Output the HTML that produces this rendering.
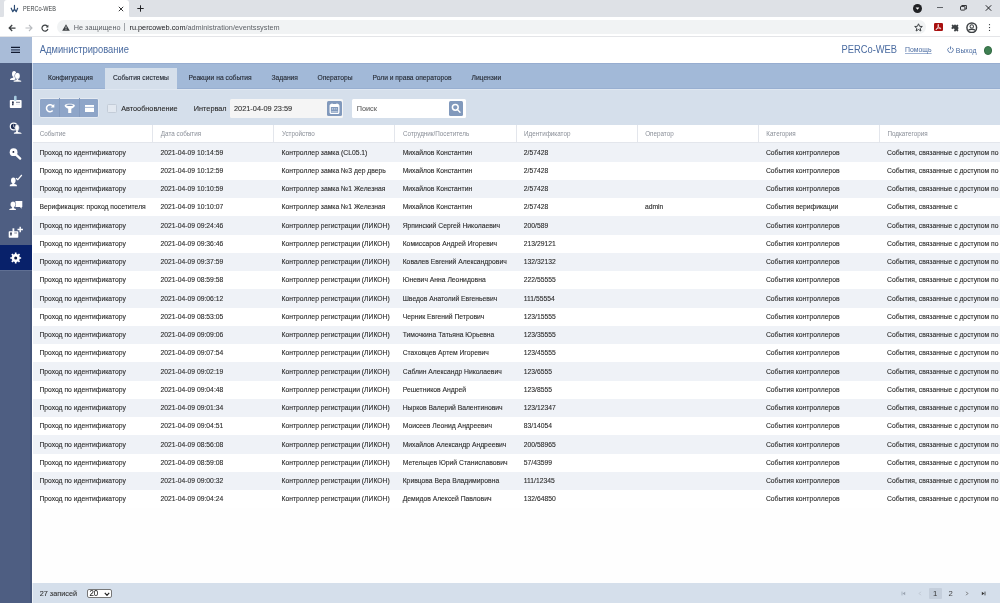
<!DOCTYPE html>
<html><head><meta charset="utf-8"><title>PERCo-WEB</title>
<style>
*{margin:0;padding:0;box-sizing:border-box}
html,body{width:1000px;height:603px;overflow:hidden;background:#fff;font-family:"Liberation Sans",sans-serif;position:relative}
#root{position:absolute;left:0;top:0;width:1000px;height:603px;overflow:hidden;will-change:transform}
.abs{position:absolute}
/* chrome */
#tabstrip{position:absolute;left:0;top:0;width:1000px;height:17.5px;background:#dee1e6}
#feet{position:absolute;left:0;top:12px;width:137px;height:5.5px;background:#fff}
#tab{position:absolute;left:4px;top:0;width:125px;height:17.5px;background:#fff;border-radius:3px 3px 0 0}
#tabL{position:absolute;left:0;top:0;width:4px;height:17.5px;background:#dee1e6;border-radius:0 0 3px 0}
#tabR{position:absolute;left:129px;top:0;width:8px;height:17.5px;background:#dee1e6;border-radius:0 0 0 3px}
#tabTL{position:absolute;left:4px;top:0;width:125px;height:6px;border-radius:3px 3px 0 0;background:#fff}
#tabtitle{position:absolute;left:23px;top:4.6px;font-size:6.8px;color:#3c4043;white-space:nowrap;line-height:8px;transform:scaleX(0.815);transform-origin:0 0}
#toolbar{position:absolute;left:0;top:17px;width:1000px;height:19.5px;background:#fff;border-bottom:0.6px solid #e4e5e8}
#omni{position:absolute;left:57px;top:20.3px;width:869px;height:14px;background:#f1f3f4;border-radius:7px}
.url{position:absolute;top:22.5px;font-size:7.3px;line-height:10px;white-space:nowrap}
/* app */
#side{position:absolute;left:0;top:36.5px;width:32px;height:567px;background:#4e5e82}
#sidehdr{position:absolute;left:0;top:36.5px;width:32px;height:26.5px;background:#a9bcd8}
#sidesel{position:absolute;left:0;top:245px;width:31.8px;height:25.8px;background:#08216a;border-bottom:1.2px solid #5f6f93}
#sideedge{position:absolute;left:29.8px;top:63px;width:2px;height:540px;background:#46567a}
#strip{position:absolute;left:31.8px;top:63px;width:1.4px;height:540px;background:rgba(255,255,255,0.5)}
#apphdr{position:absolute;left:32px;top:36.5px;width:968px;height:26.5px;background:#fff}
#title{position:absolute;left:39.8px;top:44.1px;transform:scaleY(1.08);font-size:9.35px;color:#4a6ba0;white-space:nowrap;line-height:12px}
#brand{position:absolute;left:841.5px;top:44.1px;transform:scaleY(1.08);font-size:9.35px;color:#4a6ba0;white-space:nowrap;line-height:12px}
#help{position:absolute;left:905px;top:45.1px;font-size:6.9px;color:#4a6ba0;text-decoration:underline;text-decoration-thickness:0.5px;text-decoration-color:#9fb2d2;text-underline-offset:0.5px;white-space:nowrap;line-height:9px}
#logout{position:absolute;left:955.8px;top:45.5px;font-size:6.9px;color:#4a6ba0;white-space:nowrap;line-height:9px}
#dot{position:absolute;left:983.8px;top:46px;width:8.6px;height:8.6px;border-radius:50%;background:#3f7f52;border:0.6px solid #356c45}
#tabbar{position:absolute;left:32px;top:63px;width:968px;height:26px;background:#a2b9d8;border-top:1px solid #97add0;border-bottom:0.8px solid #98afd1}
.tb{position:absolute;top:74.1px;font-size:6.7px;color:#262b35;-webkit-text-stroke:0.12px #262b35;white-space:nowrap;line-height:8px}
#acttab{position:absolute;left:105px;top:68px;width:72px;height:21px;background:#d5dfeb}
#tools{position:absolute;left:32px;top:89px;width:968px;height:36px;background:#d5dfeb;border-top:1px solid #dfe7f1}
#btngrp{position:absolute;left:39.3px;top:97.5px;width:60.1px;height:20.4px;background:#8ea5c8;border-radius:2px;border:0.6px solid #e4eaf2}
.bsep{position:absolute;top:98.1px;width:0.8px;height:19.2px;background:#8299bd}
#chk{position:absolute;left:107px;top:103.7px;width:9.8px;height:9.8px;border:0.8px solid #c3ccd8;background:#e2e8f0;border-radius:1.5px}
.lbl{position:absolute;font-size:7.3px;color:#2a2a2a;white-space:nowrap;line-height:9px;transform:scaleY(1.1);-webkit-text-stroke-width:0.1px}
#inp1{position:absolute;left:229.8px;top:99px;width:113.4px;height:18.8px;background:#f5f5f5;border-radius:1.5px}
#cal{position:absolute;left:327.4px;top:101px;width:14.4px;height:14.8px;background:#8199bc;border-radius:1.5px}
#inp2{position:absolute;left:351.8px;top:99.2px;width:113.8px;height:18.4px;background:#fff;border-radius:1.5px}
#srch{position:absolute;left:449px;top:101px;width:14px;height:14.8px;background:#8199bc;border-radius:1.5px}
/* table */
#tablebg{position:absolute;left:33.2px;top:124.9px;width:969px;height:458.4px;background:#fefefe}
#thead{position:absolute;left:33.2px;width:966.8px;overflow:hidden;background:#fff;border-bottom:0.7px solid #e3e6ec}
.hc{position:absolute;top:0;padding-top:0.6px;width:121.1px;height:100%;padding-left:7.5px;font-size:6.3px;color:#8a8f98;line-height:18.4px;white-space:nowrap;overflow:hidden;border-left:0.7px solid #e3e6ec}
.row{position:absolute;left:33.2px;width:966.8px;overflow:hidden;height:18.25px}
.odd{background:#eff2f7}
.even{background:#fff}
.c{position:absolute;top:0.4px;width:121.1px;height:100%;padding-left:8.2px;font-size:6.78px;color:#2a2a2a;-webkit-text-stroke:0.1px #2a2a2a;line-height:18.25px;transform:scaleY(1.06);white-space:nowrap;overflow:hidden}
#footer{position:absolute;left:32px;top:583.3px;width:968px;height:20px;background:#d5dfeb}
#sel{position:absolute;left:87.2px;top:588.8px;width:24.5px;height:9.6px;border:0.8px solid #767676;background:#fff;border-radius:2px}
.pg{position:absolute;top:589px;font-size:7.2px;color:#444;line-height:10px;white-space:nowrap}
#pgact{position:absolute;left:929px;top:588px;width:12.5px;height:11px;background:#c4cedb;border-radius:1px}

</style></head><body><div id="root">
<div id="tabstrip"></div>
<div id="feet"></div><div id="tabL"></div><div id="tabR"></div><div id="tab"></div>
<svg class="abs" style="left:8px;top:3px" width="14" height="12" viewBox="0 0 14 12"><path d="M3.2 5.2L4.8 8.7L6.46 6.2L8.2 8.7L9.6 5.3M6.46 2.4V7.2" stroke="#2b4a72" stroke-width="1.2" fill="none" stroke-linecap="round" stroke-linejoin="round"/></svg>
<div id="tabtitle">PERCo-WEB</div>
<svg class="abs" style="left:118px;top:6px" width="6" height="6" viewBox="0 0 6 6"><path d="M0.8 0.8L5.2 5.2M5.2 0.8L0.8 5.2" stroke="#202124" stroke-width="0.9"/></svg>
<svg class="abs" style="left:136.8px;top:5px" width="7" height="7" viewBox="0 0 7 7"><path d="M3.5 0.3V6.7M0.3 3.5H6.7" stroke="#202124" stroke-width="1"/></svg>
<svg class="abs" style="left:912.5px;top:4.1px" width="9" height="9" viewBox="0 0 9 9"><circle cx="4.5" cy="4.5" r="4.5" fill="#202124"/><path d="M2.6 3.6H6.4L4.5 5.8Z" fill="#fff"/></svg>
<div class="abs" style="left:937px;top:7px;width:6px;height:0.7px;background:#5f6368"></div>
<svg class="abs" style="left:960.3px;top:5.3px" width="7" height="5.5" viewBox="0 0 7 5.5"><rect x="0.5" y="1.4" width="4.4" height="3.7" rx="0.6" fill="none" stroke="#202124" stroke-width="0.9"/><path d="M1.8 1.2V0.5H6.4V4H5.2" fill="none" stroke="#202124" stroke-width="0.9"/></svg>
<svg class="abs" style="left:984.5px;top:5px" width="7" height="6" viewBox="0 0 7 6"><path d="M0.8 0.3L6.2 5.7M6.2 0.3L0.8 5.7" stroke="#202124" stroke-width="1"/></svg>
<div id="toolbar"></div>
<svg class="abs" style="left:7.5px;top:23.5px" width="8" height="8" viewBox="0 0 8 8"><path d="M7.5 4H1.4M4.2 1L1.2 4L4.2 7" stroke="#3c4043" stroke-width="1.25" fill="none"/></svg>
<svg class="abs" style="left:24.5px;top:23.5px" width="8" height="8" viewBox="0 0 8 8"><path d="M0.5 4H6.8M4 1L7 4L4 7" stroke="#b9bcc0" stroke-width="1.1" fill="none"/></svg>
<svg class="abs" style="left:40.5px;top:23.5px" width="8" height="8" viewBox="0 0 8 8"><path d="M6.6 2.6A3 3 0 1 0 6.9 4.8" stroke="#3c4043" stroke-width="1.2" fill="none"/><path d="M7.4 0.8V3.4H4.8Z" fill="#3c4043"/></svg>
<div id="omni"></div>
<svg class="abs" style="left:62px;top:23.5px" width="8" height="7" viewBox="0 0 8 7"><path d="M4 0.3L7.8 6.8H0.2Z" fill="#3c4043"/><path d="M4 2.4V4.5M4 5.2V6" stroke="#f1f3f4" stroke-width="0.8"/></svg>
<div class="url" style="left:73.75px;color:#5f6368;font-size:7.27px">Не защищено</div>
<div class="abs" style="left:124.3px;top:23.3px;width:0.7px;height:8px;background:#a0a4a8"></div>
<div class="url" style="left:129.5px;color:#202124"><span>ru.percoweb.com</span><span style="color:#5f6368">/administration/eventssystem</span></div>
<svg class="abs" style="left:913.5px;top:23px" width="9" height="9" viewBox="0 0 9 9"><path d="M4.5 0.8L5.6 3.3L8.3 3.5L6.2 5.3L6.9 8L4.5 6.5L2.1 8L2.8 5.3L0.7 3.5L3.4 3.3Z" fill="none" stroke="#3c4043" stroke-width="1" stroke-linejoin="round"/></svg>
<div class="abs" style="left:934.2px;top:22.9px;width:8.5px;height:8px;background:#a8100f;border-radius:1.3px"></div>
<svg class="abs" style="left:934.2px;top:22.9px" width="8.5" height="8" viewBox="0 0 8.5 8"><path d="M4.3 1.3C3.9 1.3 3.9 2.6 4.5 3.8C5.2 5.3 6.4 6 7 5.6C7.4 5.2 6 4.9 4.5 5.1C3 5.4 1.6 6.4 1.9 6.8C2.3 7.1 3.2 5.5 3.9 4.1C4.5 2.7 4.7 1.3 4.3 1.3Z" fill="none" stroke="#fff" stroke-width="0.75"/></svg>
<svg class="abs" style="left:950.8px;top:23px" width="9" height="9" viewBox="0 0 9 9"><g transform="rotate(45 4.5 4.5)"><path d="M1.8 2.5H3.5V1.9A1 1 0 0 1 5.5 1.9V2.5H7.2V4.2H7.8A1 1 0 0 1 7.8 6.2H7.2V7.9H5.5V7.3A1 1 0 0 0 3.5 7.3V7.9H1.8V6.2H1.2A1 1 0 0 1 1.2 4.2H1.8Z" fill="#3c4043"/></g></svg>
<svg class="abs" style="left:966px;top:21.5px" width="11.5" height="11.5" viewBox="0 0 12 12"><circle cx="6" cy="6" r="5.8" fill="#3c4043"/><circle cx="6" cy="6" r="4.3" fill="#fff"/><circle cx="6" cy="4.6" r="2.3" fill="#3c4043"/><circle cx="6" cy="4.6" r="1.25" fill="#fff"/><path d="M2.3 8.9C3.3 7.1 8.7 7.1 9.7 8.9" stroke="#3c4043" stroke-width="1.4" fill="none"/></svg>
<svg class="abs" style="left:987.5px;top:23px" width="3" height="9" viewBox="0 0 3 9"><rect x="0.95" y="1.1" width="1.1" height="1.1" fill="#3c4043"/><rect x="0.95" y="4" width="1.1" height="1.1" fill="#3c4043"/><rect x="0.95" y="6.9" width="1.1" height="1.1" fill="#3c4043"/></svg>

<div id="side"></div>
<div id="sidehdr"></div>
<div id="sideedge"></div>
<div id="sidesel"></div>
<svg class="abs" style="left:11px;top:46px" width="9.2" height="8" viewBox="0 0 9.2 8"><path d="M0 1.3H9.2M0 6.5H9.2" stroke="#111a30" stroke-width="1.25"/><path d="M0 3.9H9.2" stroke="#34425f" stroke-width="1.25"/></svg>
<!-- sidebar icons -->
<svg class="abs" style="left:6px;top:66px" width="20" height="20" viewBox="0 0 20 20">
<ellipse cx="8.1" cy="8" rx="2.1" ry="3" fill="#fff"/><path d="M7.2 10.5H9V12H9.5V14H4C4 12.6 5.2 12 7.2 11.8Z" fill="#fff"/>
<ellipse cx="11.4" cy="9.9" rx="2.5" ry="3.1" fill="#fff" stroke="#4e5e82" stroke-width="0.8"/>
<path d="M10.3 12.5H12.5V13.8C14.2 14 15.6 14.5 15.6 16H7.2C7.2 14.5 8.6 14 10.3 13.8Z" fill="#fff" stroke="#4e5e82" stroke-width="0.6"/>
<ellipse cx="11.4" cy="9.9" rx="2.3" ry="2.9" fill="#fff"/>
</svg>
<svg class="abs" style="left:6px;top:92px" width="20" height="20" viewBox="0 0 20 20">
<rect x="3.8" y="7.9" width="11.8" height="8.1" rx="0.8" fill="#fff"/>
<rect x="8" y="3.7" width="2.6" height="5" rx="1" fill="#a8cbe0"/>
<ellipse cx="6.9" cy="10.4" rx="0.9" ry="1.1" fill="#1b2540"/><path d="M6.3 11.2H7.5V13.3H6Z" fill="#1b2540"/>
<path d="M10 10.3H14" stroke="#3a4560" stroke-width="0.7"/><path d="M10 12.2H14" stroke="#c8cede" stroke-width="0.5"/>
</svg>
<svg class="abs" style="left:6px;top:118px" width="20" height="20" viewBox="0 0 20 20">
<circle cx="7.7" cy="8.5" r="3.4" fill="#1f2d52" stroke="#fff" stroke-width="1.2"/>
<path d="M7.6 6.4V8.8L9.2 9.8" stroke="#fff" stroke-width="0.6" fill="none"/>
<ellipse cx="11" cy="9.8" rx="2.3" ry="3.4" fill="#fff" stroke="#4e5e82" stroke-width="0.5"/>
<path d="M10.1 12.5H11.9V14C13.5 14.2 15.7 14.6 15.7 15.8H7.8C7.8 14.6 9 14.2 10.1 14Z" fill="#fff"/>
</svg>
<svg class="abs" style="left:6px;top:144px" width="20" height="20" viewBox="0 0 20 20">
<path d="M10.2 10.8L14.2 14.6" stroke="#fff" stroke-width="2.3" stroke-linecap="round"/>
<circle cx="7.6" cy="8.2" r="3.9" fill="#fff"/>
<circle cx="7.4" cy="7.9" r="0.9" fill="#0b1230"/>
</svg>
<svg class="abs" style="left:6px;top:170px" width="20" height="20" viewBox="0 0 20 20">
<ellipse cx="7.3" cy="10.6" rx="2.3" ry="3" fill="#fff"/>
<path d="M6.3 12.8H8.3V14.1C10 14.3 11 14.8 11 16.3H3.7C3.7 14.8 4.6 14.3 6.3 14.1Z" fill="#fff"/>
<path d="M10 8.2L11.8 9.7L15.8 5" stroke="#fff" stroke-width="1.2" fill="none"/>
</svg>
<svg class="abs" style="left:6px;top:196px" width="20" height="20" viewBox="0 0 20 20">
<rect x="9.4" y="5" width="6.9" height="6" fill="#fff"/><path d="M13.6 10.8L15.8 12.7L15.6 10.8Z" fill="#fff"/>
<ellipse cx="7" cy="8.4" rx="2.5" ry="2.8" fill="#fff" stroke="#4e5e82" stroke-width="0.7"/>
<path d="M6.1 10.6H7.9V12.2C9.3 12.3 10 12.7 10 14H3.2C3.2 12.7 4.4 12.3 6.1 12.2Z" fill="#fff"/>
<ellipse cx="7" cy="8.4" rx="2.3" ry="2.6" fill="#fff"/>
</svg>
<svg class="abs" style="left:6px;top:222px" width="20" height="20" viewBox="0 0 20 20">
<rect x="2.7" y="9.3" width="9.6" height="6.4" rx="0.7" fill="#fff"/>
<rect x="6.5" y="6.3" width="1.8" height="3.5" fill="#fff"/>
<ellipse cx="5" cy="11.2" rx="0.8" ry="0.9" fill="#1b2540"/><path d="M4.4 11.8H5.6V13.4H4.3Z" fill="#1b2540"/>
<path d="M8.3 11H11" stroke="#3a4560" stroke-width="0.6"/>
<path d="M14.2 4.8V10.2M11.5 7.5H16.9" stroke="#fff" stroke-width="1.4"/>
</svg>
<svg class="abs" style="left:6px;top:248px" width="20" height="20" viewBox="0 0 20 20"><polygon points="13.49,8.43 13.71,9.17 15.13,9.14 15.13,10.86 13.71,10.83 13.49,11.57 13.13,12.25 14.15,13.23 12.93,14.45 11.95,13.43 11.27,13.79 10.53,14.01 10.56,15.43 8.84,15.43 8.87,14.01 8.13,13.79 7.45,13.43 6.47,14.45 5.25,13.23 6.27,12.25 5.91,11.57 5.69,10.83 4.27,10.86 4.27,9.14 5.69,9.17 5.91,8.43 6.27,7.75 5.25,6.77 6.47,5.55 7.45,6.57 8.13,6.21 8.87,5.99 8.84,4.57 10.56,4.57 10.53,5.99 11.27,6.21 11.95,6.57 12.93,5.55 14.15,6.77 13.13,7.75" fill="#fff"/><circle cx="9.7" cy="10.0" r="1.5" fill="#08163f"/></svg>

<div id="apphdr"></div>
<div id="title">Администрирование</div>
<div id="brand">PERCo-WEB</div>
<div id="help">Помощь</div>
<svg class="abs" style="left:946.6px;top:46px" width="7" height="7" viewBox="0 0 7 7"><path d="M2 1.7A2.7 2.7 0 1 0 5 1.7" stroke="#4a6ba0" stroke-width="0.85" fill="none"/><path d="M3.5 0.4V3.5" stroke="#4a6ba0" stroke-width="0.85"/></svg>
<div id="logout">Выход</div>
<div id="dot"></div>

<div id="tabbar"></div>
<div id="acttab"></div>
<div class="tb" style="left:48px">Конфигурация</div>
<div class="tb" style="left:112.9px">События системы</div>
<div class="tb" style="left:188.5px">Реакции на события</div>
<div class="tb" style="left:271.5px">Задания</div>
<div class="tb" style="left:317.5px">Операторы</div>
<div class="tb" style="left:372.5px">Роли и права операторов</div>
<div class="tb" style="left:471.5px">Лицензии</div>

<div id="tools"></div>
<div id="btngrp"></div>
<div class="bsep" style="left:59.1px"></div>
<div class="bsep" style="left:79.3px"></div>
<svg class="abs" style="left:44.7px;top:102.8px" width="10" height="10" viewBox="0 0 10 10"><path d="M7.87 3.19A3.5 3.5 0 1 0 7.68 7.45" stroke="#fff" stroke-width="1.5" fill="none"/><path d="M9.3 0.9V4.6H5.6Z" fill="#fff"/></svg>
<svg class="abs" style="left:64px;top:103px" width="11.5" height="10.5" viewBox="0 0 11.5 10.5"><path d="M0.6 2.5C0.6 0.2 10.9 0.2 10.9 2.5C10.9 3.8 8.5 5.2 7.3 5.8V9.9H4.2V5.8C3 5.2 0.6 3.8 0.6 2.5Z" fill="#fff"/><ellipse cx="5.75" cy="2.3" rx="3.4" ry="0.75" fill="#7a90b3"/></svg>
<svg class="abs" style="left:84.9px;top:104.8px" width="9" height="7.2" viewBox="0 0 9 7.2"><rect x="0" y="0" width="9" height="7.1" fill="#fff"/><path d="M0 2.4H9" stroke="#8ea5c8" stroke-width="0.8"/></svg>
<div id="chk"></div>
<div class="lbl" style="left:121.2px;top:104.4px">Автообновление</div>
<div class="lbl" style="left:193.8px;top:103.6px">Интервал</div>
<div id="inp1"></div>
<div class="lbl" style="left:234px;top:103.7px;font-size:7.37px;color:#333">2021-04-09 23:59</div>
<div id="cal"></div>
<svg class="abs" style="left:329.2px;top:102.6px" width="11" height="11.5" viewBox="0 0 11 11.5"><rect x="1.2" y="1.6" width="8.6" height="8.9" rx="1.2" fill="none" stroke="#fff" stroke-width="1.3"/><rect x="1.2" y="1.6" width="8.6" height="2.4" fill="#fff"/><path d="M3 0.4V2M8 0.4V2" stroke="#fff" stroke-width="1"/><path d="M2.9 5.9H8.1" stroke="#fff" stroke-width="0.9" stroke-dasharray="1 0.9"/><path d="M2.4 8.6H8.6" stroke="#dfe6f0" stroke-width="0.6"/></svg>
<div id="inp2"></div>
<div class="lbl" style="left:356.7px;top:104px;color:#666">Поиск</div>
<div id="srch"></div>
<svg class="abs" style="left:451px;top:102.8px" width="10" height="10.5" viewBox="0 0 10 10.5"><circle cx="4.3" cy="4.3" r="2.9" fill="none" stroke="#fff" stroke-width="1.5"/><path d="M6.4 6.5L9 9.2" stroke="#fff" stroke-width="1.3" stroke-linecap="round"/></svg>

<div id="tablebg"></div>
<div id="footer"></div>
<div class="lbl" style="left:39.7px;top:589px;color:#333">27 записей</div>
<div id="sel"></div>
<div class="lbl" style="left:89.4px;top:589.3px;color:#222;font-size:7.9px">20</div>
<svg class="abs" style="left:103.6px;top:591.6px" width="6" height="4.5" viewBox="0 0 6 4.5"><path d="M0.8 0.9L3 3.3L5.2 0.9" stroke="#222" stroke-width="1.2" fill="none"/></svg>
<svg class="abs" style="left:900.5px;top:591.3px" width="5" height="5" viewBox="0 0 5 5"><path d="M1 0.6V4.4" stroke="#9aa3b0" stroke-width="0.7"/><path d="M4.2 0.8L1.6 2.5L4.2 4.2Z" fill="#9aa3b0"/></svg>
<svg class="abs" style="left:917.5px;top:591.3px" width="4" height="5" viewBox="0 0 4 5"><path d="M2.8 0.8L1.2 2.5L2.8 4.2" stroke="#b3bac5" stroke-width="0.7" fill="none"/></svg>
<div id="pgact"></div>
<div class="pg" style="left:932.9px;color:#333;font-size:7.7px;top:588.6px">1</div>
<div class="pg" style="left:948.5px;color:#444;font-size:7.7px;top:588.6px">2</div>
<svg class="abs" style="left:965.3px;top:591.3px" width="4" height="5" viewBox="0 0 4 5"><path d="M1.2 0.8L2.8 2.5L1.2 4.2" stroke="#555" stroke-width="0.8" fill="none"/></svg>
<svg class="abs" style="left:981px;top:591.3px" width="5" height="5" viewBox="0 0 5 5"><path d="M0.8 0.8L3.4 2.5L0.8 4.2Z" fill="#333"/><path d="M4 0.6V4.4" stroke="#333" stroke-width="0.8"/></svg>

<div id="thead" style="top:124.9px;height:18.4px"><div class="hc" style="left:-2.00px">Событие</div><div class="hc" style="left:119.10px">Дата события</div><div class="hc" style="left:240.20px">Устройство</div><div class="hc" style="left:361.30px">Сотрудник/Посетитель</div><div class="hc" style="left:482.40px">Идентификатор</div><div class="hc" style="left:603.50px">Оператор</div><div class="hc" style="left:724.60px">Категория</div><div class="hc" style="left:845.70px">Подкатегория</div></div>
<div class="row odd" style="top:143.30px"><div class="c" style="left:-2.00px">Проход по идентификатору</div><div class="c" style="left:119.10px">2021-04-09 10:14:59</div><div class="c" style="left:240.20px">Контроллер замка (CL05.1)</div><div class="c" style="left:361.30px">Михайлов Константин</div><div class="c" style="left:482.40px">2/57428</div><div class="c" style="left:603.50px"></div><div class="c" style="left:724.60px">События контроллеров</div><div class="c" style="left:845.70px">События, связанные с доступом по</div></div><div class="row even" style="top:161.55px"><div class="c" style="left:-2.00px">Проход по идентификатору</div><div class="c" style="left:119.10px">2021-04-09 10:12:59</div><div class="c" style="left:240.20px">Контроллер замка №3 дер дверь</div><div class="c" style="left:361.30px">Михайлов Константин</div><div class="c" style="left:482.40px">2/57428</div><div class="c" style="left:603.50px"></div><div class="c" style="left:724.60px">События контроллеров</div><div class="c" style="left:845.70px">События, связанные с доступом по</div></div><div class="row odd" style="top:179.80px"><div class="c" style="left:-2.00px">Проход по идентификатору</div><div class="c" style="left:119.10px">2021-04-09 10:10:59</div><div class="c" style="left:240.20px">Контроллер замка №1 Железная</div><div class="c" style="left:361.30px">Михайлов Константин</div><div class="c" style="left:482.40px">2/57428</div><div class="c" style="left:603.50px"></div><div class="c" style="left:724.60px">События контроллеров</div><div class="c" style="left:845.70px">События, связанные с доступом по</div></div><div class="row even" style="top:198.05px"><div class="c" style="left:-2.00px">Верификация: проход посетителя</div><div class="c" style="left:119.10px">2021-04-09 10:10:07</div><div class="c" style="left:240.20px">Контроллер замка №1 Железная</div><div class="c" style="left:361.30px">Михайлов Константин</div><div class="c" style="left:482.40px">2/57428</div><div class="c" style="left:603.50px">admin</div><div class="c" style="left:724.60px">События верификации</div><div class="c" style="left:845.70px">События, связанные с</div></div><div class="row odd" style="top:216.30px"><div class="c" style="left:-2.00px">Проход по идентификатору</div><div class="c" style="left:119.10px">2021-04-09 09:24:46</div><div class="c" style="left:240.20px">Контроллер регистрации (ЛИКОН)</div><div class="c" style="left:361.30px">Ярпинский Сергей Николаевич</div><div class="c" style="left:482.40px">200/589</div><div class="c" style="left:603.50px"></div><div class="c" style="left:724.60px">События контроллеров</div><div class="c" style="left:845.70px">События, связанные с доступом по</div></div><div class="row even" style="top:234.55px"><div class="c" style="left:-2.00px">Проход по идентификатору</div><div class="c" style="left:119.10px">2021-04-09 09:36:46</div><div class="c" style="left:240.20px">Контроллер регистрации (ЛИКОН)</div><div class="c" style="left:361.30px">Комиссаров Андрей Игоревич</div><div class="c" style="left:482.40px">213/29121</div><div class="c" style="left:603.50px"></div><div class="c" style="left:724.60px">События контроллеров</div><div class="c" style="left:845.70px">События, связанные с доступом по</div></div><div class="row odd" style="top:252.80px"><div class="c" style="left:-2.00px">Проход по идентификатору</div><div class="c" style="left:119.10px">2021-04-09 09:37:59</div><div class="c" style="left:240.20px">Контроллер регистрации (ЛИКОН)</div><div class="c" style="left:361.30px">Ковалев Евгений Александрович</div><div class="c" style="left:482.40px">132/32132</div><div class="c" style="left:603.50px"></div><div class="c" style="left:724.60px">События контроллеров</div><div class="c" style="left:845.70px">События, связанные с доступом по</div></div><div class="row even" style="top:271.05px"><div class="c" style="left:-2.00px">Проход по идентификатору</div><div class="c" style="left:119.10px">2021-04-09 08:59:58</div><div class="c" style="left:240.20px">Контроллер регистрации (ЛИКОН)</div><div class="c" style="left:361.30px">Юневич Анна Леонидовна</div><div class="c" style="left:482.40px">222/55555</div><div class="c" style="left:603.50px"></div><div class="c" style="left:724.60px">События контроллеров</div><div class="c" style="left:845.70px">События, связанные с доступом по</div></div><div class="row odd" style="top:289.30px"><div class="c" style="left:-2.00px">Проход по идентификатору</div><div class="c" style="left:119.10px">2021-04-09 09:06:12</div><div class="c" style="left:240.20px">Контроллер регистрации (ЛИКОН)</div><div class="c" style="left:361.30px">Шведов Анатолий Евгеньевич</div><div class="c" style="left:482.40px">111/55554</div><div class="c" style="left:603.50px"></div><div class="c" style="left:724.60px">События контроллеров</div><div class="c" style="left:845.70px">События, связанные с доступом по</div></div><div class="row even" style="top:307.55px"><div class="c" style="left:-2.00px">Проход по идентификатору</div><div class="c" style="left:119.10px">2021-04-09 08:53:05</div><div class="c" style="left:240.20px">Контроллер регистрации (ЛИКОН)</div><div class="c" style="left:361.30px">Черник Евгений Петрович</div><div class="c" style="left:482.40px">123/15555</div><div class="c" style="left:603.50px"></div><div class="c" style="left:724.60px">События контроллеров</div><div class="c" style="left:845.70px">События, связанные с доступом по</div></div><div class="row odd" style="top:325.80px"><div class="c" style="left:-2.00px">Проход по идентификатору</div><div class="c" style="left:119.10px">2021-04-09 09:09:06</div><div class="c" style="left:240.20px">Контроллер регистрации (ЛИКОН)</div><div class="c" style="left:361.30px">Тимочкина Татьяна Юрьевна</div><div class="c" style="left:482.40px">123/35555</div><div class="c" style="left:603.50px"></div><div class="c" style="left:724.60px">События контроллеров</div><div class="c" style="left:845.70px">События, связанные с доступом по</div></div><div class="row even" style="top:344.05px"><div class="c" style="left:-2.00px">Проход по идентификатору</div><div class="c" style="left:119.10px">2021-04-09 09:07:54</div><div class="c" style="left:240.20px">Контроллер регистрации (ЛИКОН)</div><div class="c" style="left:361.30px">Стаховцев Артем Игоревич</div><div class="c" style="left:482.40px">123/45555</div><div class="c" style="left:603.50px"></div><div class="c" style="left:724.60px">События контроллеров</div><div class="c" style="left:845.70px">События, связанные с доступом по</div></div><div class="row odd" style="top:362.30px"><div class="c" style="left:-2.00px">Проход по идентификатору</div><div class="c" style="left:119.10px">2021-04-09 09:02:19</div><div class="c" style="left:240.20px">Контроллер регистрации (ЛИКОН)</div><div class="c" style="left:361.30px">Саблин Александр Николаевич</div><div class="c" style="left:482.40px">123/6555</div><div class="c" style="left:603.50px"></div><div class="c" style="left:724.60px">События контроллеров</div><div class="c" style="left:845.70px">События, связанные с доступом по</div></div><div class="row even" style="top:380.55px"><div class="c" style="left:-2.00px">Проход по идентификатору</div><div class="c" style="left:119.10px">2021-04-09 09:04:48</div><div class="c" style="left:240.20px">Контроллер регистрации (ЛИКОН)</div><div class="c" style="left:361.30px">Решетников Андрей</div><div class="c" style="left:482.40px">123/8555</div><div class="c" style="left:603.50px"></div><div class="c" style="left:724.60px">События контроллеров</div><div class="c" style="left:845.70px">События, связанные с доступом по</div></div><div class="row odd" style="top:398.80px"><div class="c" style="left:-2.00px">Проход по идентификатору</div><div class="c" style="left:119.10px">2021-04-09 09:01:34</div><div class="c" style="left:240.20px">Контроллер регистрации (ЛИКОН)</div><div class="c" style="left:361.30px">Нырков Валерий Валентинович</div><div class="c" style="left:482.40px">123/12347</div><div class="c" style="left:603.50px"></div><div class="c" style="left:724.60px">События контроллеров</div><div class="c" style="left:845.70px">События, связанные с доступом по</div></div><div class="row even" style="top:417.05px"><div class="c" style="left:-2.00px">Проход по идентификатору</div><div class="c" style="left:119.10px">2021-04-09 09:04:51</div><div class="c" style="left:240.20px">Контроллер регистрации (ЛИКОН)</div><div class="c" style="left:361.30px">Моисеев Леонид Андреевич</div><div class="c" style="left:482.40px">83/14054</div><div class="c" style="left:603.50px"></div><div class="c" style="left:724.60px">События контроллеров</div><div class="c" style="left:845.70px">События, связанные с доступом по</div></div><div class="row odd" style="top:435.30px"><div class="c" style="left:-2.00px">Проход по идентификатору</div><div class="c" style="left:119.10px">2021-04-09 08:56:08</div><div class="c" style="left:240.20px">Контроллер регистрации (ЛИКОН)</div><div class="c" style="left:361.30px">Михайлов Александр Андреевич</div><div class="c" style="left:482.40px">200/58965</div><div class="c" style="left:603.50px"></div><div class="c" style="left:724.60px">События контроллеров</div><div class="c" style="left:845.70px">События, связанные с доступом по</div></div><div class="row even" style="top:453.55px"><div class="c" style="left:-2.00px">Проход по идентификатору</div><div class="c" style="left:119.10px">2021-04-09 08:59:08</div><div class="c" style="left:240.20px">Контроллер регистрации (ЛИКОН)</div><div class="c" style="left:361.30px">Метельцев Юрий Станиславович</div><div class="c" style="left:482.40px">57/43599</div><div class="c" style="left:603.50px"></div><div class="c" style="left:724.60px">События контроллеров</div><div class="c" style="left:845.70px">События, связанные с доступом по</div></div><div class="row odd" style="top:471.80px"><div class="c" style="left:-2.00px">Проход по идентификатору</div><div class="c" style="left:119.10px">2021-04-09 09:00:32</div><div class="c" style="left:240.20px">Контроллер регистрации (ЛИКОН)</div><div class="c" style="left:361.30px">Кривцова Вера Владимировна</div><div class="c" style="left:482.40px">111/12345</div><div class="c" style="left:603.50px"></div><div class="c" style="left:724.60px">События контроллеров</div><div class="c" style="left:845.70px">События, связанные с доступом по</div></div><div class="row even" style="top:490.05px"><div class="c" style="left:-2.00px">Проход по идентификатору</div><div class="c" style="left:119.10px">2021-04-09 09:04:24</div><div class="c" style="left:240.20px">Контроллер регистрации (ЛИКОН)</div><div class="c" style="left:361.30px">Демидов Алексей Павлович</div><div class="c" style="left:482.40px">132/64850</div><div class="c" style="left:603.50px"></div><div class="c" style="left:724.60px">События контроллеров</div><div class="c" style="left:845.70px">События, связанные с доступом по</div></div>
<div id="strip"></div>
</div></body></html>
